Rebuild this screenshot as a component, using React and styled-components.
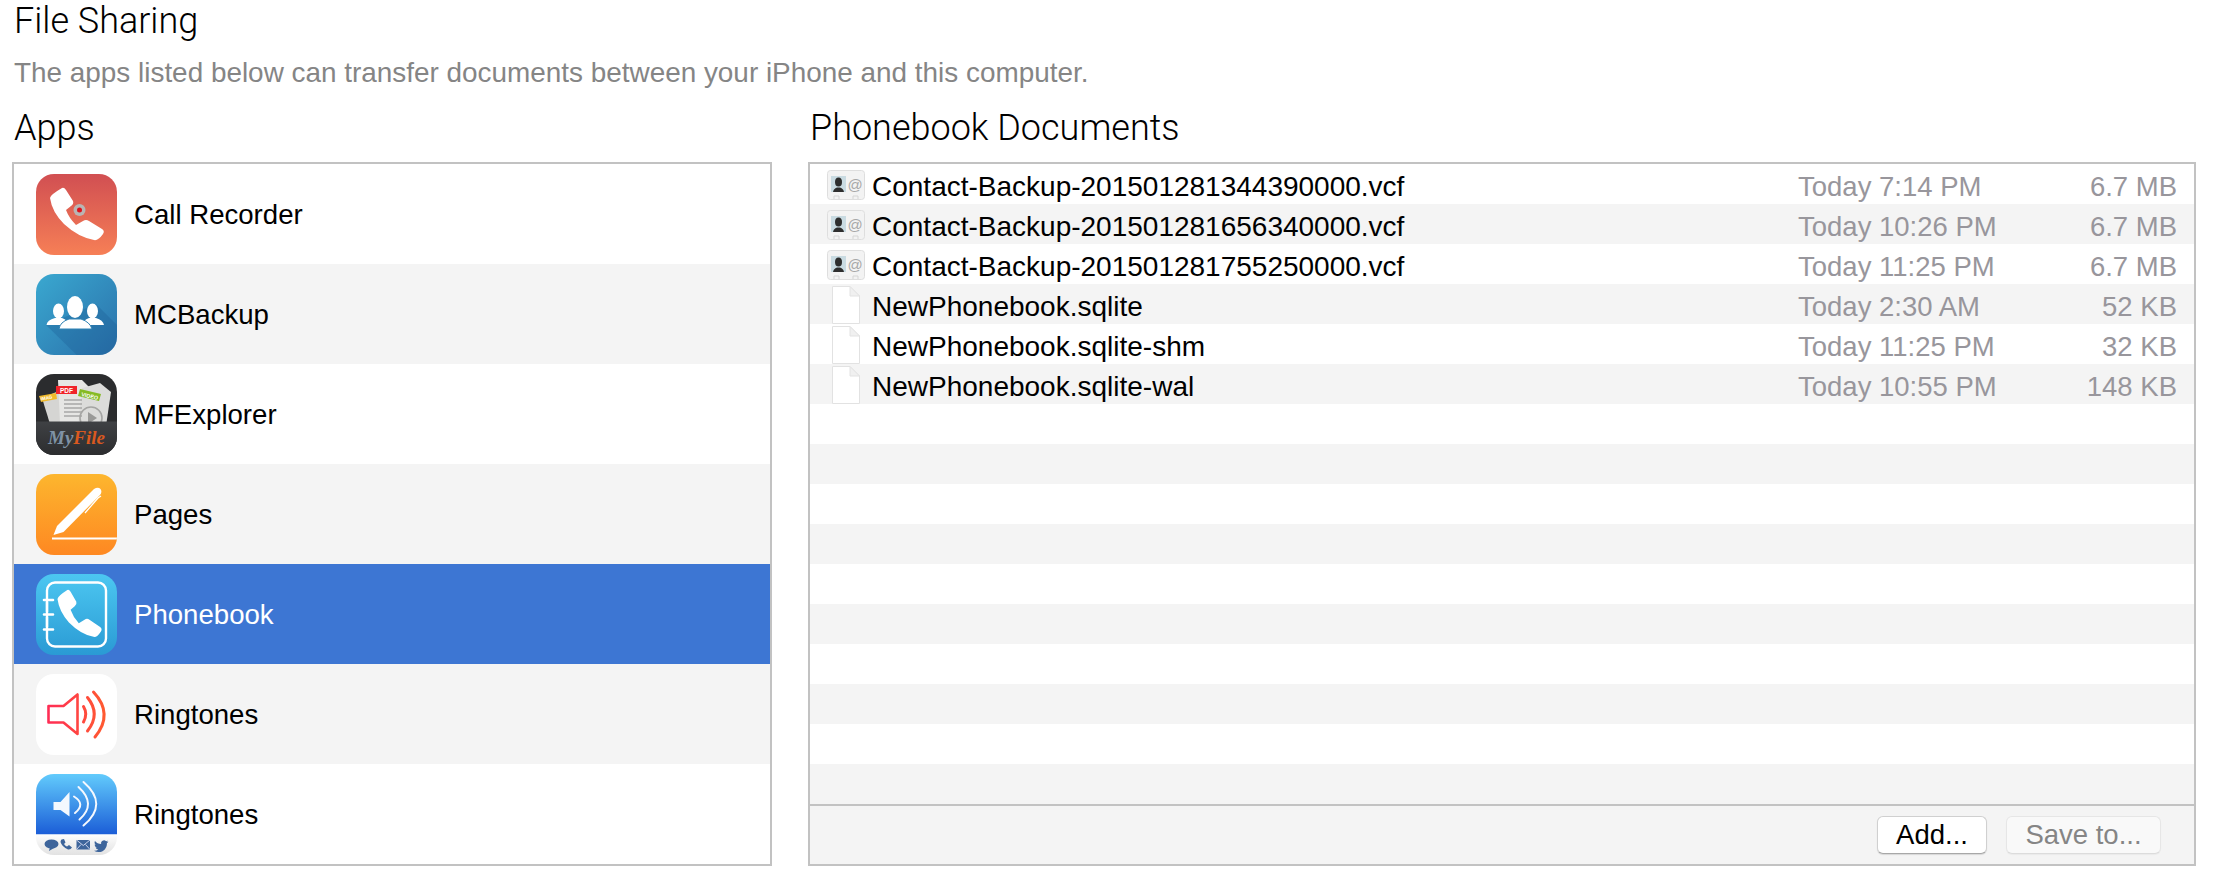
import React from "react";
import styled, { createGlobalStyle } from "styled-components";

const GlobalStyle = createGlobalStyle`
  html, body {
    margin: 0;
    padding: 0;
    background: #fff;
    font-family: "Liberation Sans", Arial, sans-serif;
  }
`;

const Page = styled.div`
  width: 2226px;
  height: 892px;
  padding: 0 30px 0 12px;
  box-sizing: border-box;
  overflow: hidden;
`;

const Title = styled.h1`
  margin: 0 0 0 2px;
  height: 42px;
  font: 300 36px/42px Roboto, sans-serif;
  color: #000;
`;

const Subtitle = styled.p`
  margin: 15px 0 0 2px;
  height: 32px;
  font-size: 27.9px;
  line-height: 32px;
  color: #858585;
`;

const Columns = styled.div`
  display: grid;
  grid-template-columns: 760px 1388px;
  column-gap: 36px;
  margin-top: 18px;
`;

const Heading = styled.h2`
  margin: 0 0 0 2px;
  height: 55px;
  font: 300 36px/42px Roboto, sans-serif;
  color: #000;
`;

const Panel = styled.div`
  display: flex;
  flex-direction: column;
  height: 704px;
  box-sizing: border-box;
  border: 2px solid #c2c2c2;
  background: #fff;
`;

const AppRow = styled.div`
  display: flex;
  align-items: center;
  gap: 17px;
  height: 100px;
  padding-left: 22px;
  font-size: 27.6px;
  color: ${(p) => (p.$selected ? "#fff" : "#000")};
  background: ${(p) => (p.$selected ? "#3d76d3" : p.$alt ? "#f4f4f4" : "#fff")};
`;

const AppLabel = styled.span`
  padding-top: 1px;
`;

const AppIcon = styled.svg`
  display: block;
  flex: none;
  width: 81px;
  height: 81px;
`;

const DocList = styled.div`
  flex: 1;
`;

const DocRow = styled.div`
  display: grid;
  grid-template-columns: 62px 926px 1fr auto;
  align-items: center;
  height: 40px;
  padding-right: 17px;
  background: ${(p) => (p.$alt ? "#f4f4f4" : "#fff")};
`;

const IconCell = styled.div`
  display: flex;
  justify-content: center;
  width: 38px;
  height: 38px;
  align-items: center;
  padding-left: 17px;
  padding-top: ${(p) => (p.$contact ? 4 : 1)}px;
  box-sizing: content-box;
  margin-top: ${(p) => (p.$contact ? -3 : 0)}px;
`;

const FileName = styled.span`
  padding-top: 6px;
  font-size: 28px;
  color: #000;
`;

const DateCell = styled.span`
  padding-top: 6px;
  font-size: 27.5px;
  color: #98969c;
`;

const SizeCell = styled.span`
  padding-top: 6px;
  font-size: 27.5px;
  color: #98969c;
  text-align: right;
`;

const Footer = styled.div`
  display: flex;
  justify-content: flex-end;
  align-items: center;
  gap: 19px;
  height: 58px;
  padding-right: 33px;
  border-top: 2px solid #c2c2c2;
  background: #f4f4f4;
`;

const Button = styled.button`
  height: 38px;
  width: ${(p) => p.$width}px;
  padding: 0;
  border: 1px solid ${(p) => (p.disabled ? "#e6e6e6" : "#d0d0d0")};
  border-bottom-color: ${(p) => (p.disabled ? "#dcdcdc" : "#a8a8a8")};
  border-radius: 6px;
  font: 27.5px/34px "Liberation Sans", Arial, sans-serif;
  color: ${(p) => (p.disabled ? "#858585" : "#000")};
  background: ${(p) => (p.disabled ? "#f9f9f9" : "#fff")};
  box-shadow: 0 1px 1px rgba(0, 0, 0, ${(p) => (p.disabled ? 0.04 : 0.12)});
`;

const HANDSET =
  "M14 24Q14 21 26 14Q28 13 30 16L37 27Q38 30 35 32L30 36Q33 44 40 51L47 47Q50 45 53 47L66 55Q69 57 67 60Q62 67 58 66Q42 63 28 50Q16 38 14 24Z";
const TWITTER =
  "M23.953 4.57a10 10 0 01-2.825.775 4.958 4.958 0 002.163-2.723c-.951.555-2.005.959-3.127 1.184a4.92 4.92 0 00-8.384 4.482C7.69 8.095 4.067 6.13 1.64 3.162a4.822 4.822 0 00-.666 2.475c0 1.71.87 3.213 2.188 4.096a4.904 4.904 0 01-2.228-.616v.06a4.923 4.923 0 003.946 4.827 4.996 4.996 0 01-2.212.085 4.936 4.936 0 004.604 3.417 9.867 9.867 0 01-6.102 2.105c-.39 0-.779-.023-1.17-.067a13.995 13.995 0 007.557 2.209c9.053 0 13.998-7.496 13.998-13.985 0-.21 0-.42-.015-.63A9.935 9.935 0 0024 4.59z";

function Squircle({ id, children }) {
  return (
    <AppIcon viewBox="0 0 81 81">
      <defs>
        <clipPath id={id}>
          <rect width="81" height="81" rx="18" />
        </clipPath>
      </defs>
      <g clipPath={`url(#${id})`}>{children}</g>
    </AppIcon>
  );
}

function CallRecorderIcon() {
  return (
    <Squircle id="cr">
      <defs>
        <linearGradient id="crBg" x1="0" y1="0" x2="0" y2="1">
          <stop offset="0" stopColor="#d14f52" />
          <stop offset="1" stopColor="#f67f56" />
        </linearGradient>
      </defs>
      <rect width="81" height="81" fill="url(#crBg)" />
      <path d={HANDSET} fill="#fff" />
      <circle cx="43.5" cy="36" r="6" fill="#b9b4b2" />
      <circle cx="43.5" cy="36" r="2.5" fill="#e0101c" />
    </Squircle>
  );
}

function McBackupIcon() {
  return (
    <Squircle id="mc">
      <defs>
        <linearGradient id="mcBg" x1="0" y1="0" x2="1" y2="1">
          <stop offset="0" stopColor="#3aa8d0" />
          <stop offset="1" stopColor="#2a70aa" />
        </linearGradient>
      </defs>
      <rect width="81" height="81" fill="url(#mcBg)" />
      <path d="M10 51L60 30L90 60V90H50Z" fill="#1c5a92" opacity=".3" />
      <g fill="#fff">
        <ellipse cx="22.5" cy="37" rx="5.5" ry="7.5" />
        <ellipse cx="56.5" cy="37" rx="5.5" ry="7.5" />
        <path d="M10.5 51Q11 46 19 44H26Q32 46 33 51Z" />
        <path d="M46 51Q47 46 53 44H60Q67 46 68 51Z" />
        <ellipse cx="39" cy="33" rx="8" ry="11" fill="#fff" />
        <path d="M23 55Q24 48 33 45H45Q54 48 56 55Z" stroke="#2f82b4" strokeWidth="1" />
      </g>
    </Squircle>
  );
}

function MfExplorerIcon() {
  return (
    <Squircle id="mf">
      <defs>
        <linearGradient id="mfBg" x1="0" y1="0" x2="0" y2="1">
          <stop offset="0" stopColor="#3f4144" />
          <stop offset="1" stopColor="#2c2d2f" />
        </linearGradient>
      </defs>
      <rect width="81" height="81" fill="#2b2c2e" />
      <path d="M6 24L30 14L40 50H14Z" fill="#d5d5d3" />
      <path d="M22 6H46L55 15V50H24Z" fill="#e6e6e4" />
      <path d="M46 14L64 9L75 18L70 52H42Z" fill="#dcdcda" />
      <g stroke="#a8a8a6" strokeWidth="1.6">
        <path d="M28 26H46M28 30H46M28 34H46M28 38H46M28 42H46" />
      </g>
      <circle cx="55" cy="44" r="11" fill="none" stroke="#a5a5a3" strokeWidth="1.6" />
      <path d="M52 38L61 44L52 50Z" fill="#9a9a98" />
      <path d="M3 22L20 19L21 25L5 28Z" fill="#f0b92a" />
      <path d="M44 15L65 20L63 27L42 22Z" fill="#86bb24" />
      <rect x="20" y="12" width="21" height="8" fill="#f0242a" />
      <text x="30.5" y="18.500" textAnchor="middle" fontSize="6.500" fontWeight="700" fontFamily="'Liberation Sans'" fill="#fff">PDF</text>
      <text x="5" y="26.500" fontSize="4.500" fontWeight="700" fontFamily="'Liberation Sans'" fill="#fff" transform="rotate(-10 5 26.500)">IMAG</text>
      <text x="45" y="22" fontSize="5.500" fontWeight="700" fontFamily="'Liberation Sans'" fill="#fff" transform="rotate(13 45 22)">VIDEO</text>
      <rect y="47.500" width="81" height="33.500" fill="url(#mfBg)" />
      <text x="12" y="70" fontSize="19" fontWeight="700" fontStyle="italic" fontFamily="'Liberation Serif'">
        <tspan fill="#7f93a6">My</tspan>
        <tspan fill="#d9591f">File</tspan>
      </text>
    </Squircle>
  );
}

function PagesIcon() {
  return (
    <Squircle id="pg">
      <defs>
        <linearGradient id="pgBg" x1="0" y1="0" x2="0" y2="1">
          <stop offset="0" stopColor="#fdb62e" />
          <stop offset="1" stopColor="#fe8822" />
        </linearGradient>
      </defs>
      <rect width="81" height="81" fill="url(#pgBg)" />
      <path d="M17.5 61L21 52L58 15Q62 12.500 64.500 15Q66.500 18 64 21L27.500 58Z" fill="#fff" />
      <path d="M49 39L62 24L65 22" stroke="#fff" strokeWidth="1.3" fill="none" />
      <path d="M16 64.500H81" stroke="#fff" strokeWidth="1.8" />
    </Squircle>
  );
}

function PhonebookIcon() {
  return (
    <Squircle id="pb">
      <defs>
        <linearGradient id="pbBg" x1="0" y1="0" x2="0" y2="1">
          <stop offset="0" stopColor="#4cc7f1" />
          <stop offset="1" stopColor="#2a9ad4" />
        </linearGradient>
      </defs>
      <rect width="81" height="81" fill="url(#pbBg)" />
      <rect x="11" y="8.500" width="59" height="64" rx="8" fill="none" stroke="#fff" strokeWidth="2.400" />
      <path d="M8 26H17M8 40.500H17M8 55.500H17" stroke="#fff" strokeWidth="2.600" strokeLinecap="round" />
      <path d="M11 28V38M11 43V53" stroke="#fff" strokeWidth="2.400" />
      <g transform="translate(10 3.400) scale(.82 .9)">
        <path d={HANDSET} fill="#fff" />
      </g>
    </Squircle>
  );
}

function RedSpeakerIcon() {
  return (
    <Squircle id="rs">
      <defs>
        <linearGradient id="rsLine" gradientUnits="userSpaceOnUse" x1="12" y1="40" x2="69" y2="40">
          <stop offset="0" stopColor="#ff2d55" />
          <stop offset="1" stopColor="#ff5a30" />
        </linearGradient>
      </defs>
      <rect width="81" height="81" fill="#fff" />
      <g fill="none" stroke="url(#rsLine)" strokeWidth="2.600" strokeLinejoin="round" strokeLinecap="round">
        <path d="M12.500 32H27.500L41.500 20.500V60L27.500 48.500H12.500Z" />
        <path d="M47.500 32.500Q52 40 47.500 48" strokeWidth="3" />
        <path d="M51.500 23.500Q65 40 51.500 57" strokeWidth="3" />
        <path d="M57.500 18Q78 40 59 63" strokeWidth="3" />
      </g>
    </Squircle>
  );
}

function BlueSpeakerIcon() {
  return (
    <Squircle id="bs">
      <defs>
        <linearGradient id="bsBg" x1="0" y1="0" x2="0" y2="1">
          <stop offset="0" stopColor="#62cbfc" />
          <stop offset="1" stopColor="#1b5dd7" />
        </linearGradient>
        <linearGradient id="bsFoot" x1="0" y1="0" x2="0" y2="1">
          <stop offset="0" stopColor="#fdfdfd" />
          <stop offset="1" stopColor="#e2e2e2" />
        </linearGradient>
      </defs>
      <rect width="81" height="60.500" fill="url(#bsBg)" />
      <rect y="60.500" width="81" height="20.500" fill="url(#bsFoot)" />
      <path d="M17.500 28H24.500L33.500 18V42.500L24.500 36H17.500Z" fill="#f4f8fe" />
      <g fill="none" stroke="#f4f8fe" strokeWidth="2" strokeLinecap="round">
        <path d="M38 22.500Q50 30 39 39" />
        <path d="M42.500 13Q61 30 43.500 45.500" />
        <path d="M47.500 8Q73 30 47.500 51.500" />
      </g>
      <g fill="#3e659b">
        <ellipse cx="15.500" cy="70" rx="7" ry="4.500" />
        <path d="M14 73L13 77L18 74Z" />
        <path d="M25.500 65.500L28 65L29.500 68.500L28 70Q29.500 72 31 72.500L33 71L36 73.500Q34.500 76 32 75.500Q26 73 24.500 68Q24.500 66.500 25.500 65.500Z" />
        <rect x="40.500" y="66" width="13.500" height="9.500" />
        <g transform="translate(58 65) scale(.6)">
          <path d={TWITTER} />
        </g>
      </g>
      <path d="M40.500 66L47.250 71.500L54 66M40.500 75.500L45 70.500M54 75.500L49.500 70.500" fill="none" stroke="#eef" strokeWidth=".8" />
    </Squircle>
  );
}

const ContactSvg = styled.svg`
  display: block;
  flex: none;
  width: 38px;
  height: 30px;
`;

function ContactIcon() {
  return (
    <ContactSvg viewBox="0 0 38 30">
      <rect x=".5" y=".5" width="37" height="29" rx="3" fill="#f3f3f3" stroke="#dedede" />
      <rect x="4" y="6" width="15" height="16" fill="#c9dbe2" />
      <ellipse cx="11.500" cy="12" rx="3.500" ry="4.500" fill="#2e2e2e" />
      <path d="M6 22Q6.500 18.500 10 17.500H13Q16.500 18.500 17 22Z" fill="#2e2e2e" />
      <text x="28" y="20" textAnchor="middle" fontSize="15" fontFamily="'Liberation Sans'" fill="#a8a8a8">@</text>
      <path d="M7 29V26H12V29M26 29V26H31V29" fill="none" stroke="#d5d5d5" />
    </ContactSvg>
  );
}

const DocSvg = styled.svg`
  display: block;
  flex: none;
  width: 30px;
  height: 38px;
`;

function DocIcon() {
  return (
    <DocSvg viewBox="0 0 30 38">
      <path d="M1.500 .5H19L28.500 10V37.500H1.500Z" fill="#fff" stroke="#e2e2e2" />
      <path d="M19 .5V10H28.500Z" fill="#f0f0f0" stroke="#e2e2e2" />
    </DocSvg>
  );
}

const apps = [
  { name: "Call Recorder", Icon: CallRecorderIcon },
  { name: "MCBackup", Icon: McBackupIcon },
  { name: "MFExplorer", Icon: MfExplorerIcon },
  { name: "Pages", Icon: PagesIcon },
  { name: "Phonebook", Icon: PhonebookIcon, selected: true },
  { name: "Ringtones", Icon: RedSpeakerIcon },
  { name: "Ringtones", Icon: BlueSpeakerIcon },
];

const docs = [
  { name: "Contact-Backup-201501281344390000.vcf", date: "Today 7:14 PM", size: "6.7 MB", contact: true },
  { name: "Contact-Backup-201501281656340000.vcf", date: "Today 10:26 PM", size: "6.7 MB", contact: true },
  { name: "Contact-Backup-201501281755250000.vcf", date: "Today 11:25 PM", size: "6.7 MB", contact: true },
  { name: "NewPhonebook.sqlite", date: "Today 2:30 AM", size: "52 KB" },
  { name: "NewPhonebook.sqlite-shm", date: "Today 11:25 PM", size: "32 KB" },
  { name: "NewPhonebook.sqlite-wal", date: "Today 10:55 PM", size: "148 KB" },
];

const emptyRows = Array.from({ length: 10 });

export default function App() {
  return (
    <Page>
      <GlobalStyle />
      <Title>File Sharing</Title>
      <Subtitle>The apps listed below can transfer documents between your iPhone and this computer.</Subtitle>
      <Columns>
        <div>
          <Heading>Apps</Heading>
          <Panel>
            {apps.map(({ name, Icon, selected }, i) => (
              <AppRow key={i} $alt={i % 2 === 1} $selected={selected}>
                <Icon />
                <AppLabel>{name}</AppLabel>
              </AppRow>
            ))}
          </Panel>
        </div>
        <div>
          <Heading>Phonebook Documents</Heading>
          <Panel>
            <DocList>
              {docs.map((d, i) => (
                <DocRow key={d.name} $alt={i % 2 === 1}>
                  <IconCell $contact={d.contact}>{d.contact ? <ContactIcon /> : <DocIcon />}</IconCell>
                  <FileName>{d.name}</FileName>
                  <DateCell>{d.date}</DateCell>
                  <SizeCell>{d.size}</SizeCell>
                </DocRow>
              ))}
              {emptyRows.map((_, i) => (
                <DocRow key={i} $alt={i % 2 === 1} />
              ))}
            </DocList>
            <Footer>
              <Button $width={110}>Add...</Button>
              <Button $width={155} disabled>Save to...</Button>
            </Footer>
          </Panel>
        </div>
      </Columns>
    </Page>
  );
}
